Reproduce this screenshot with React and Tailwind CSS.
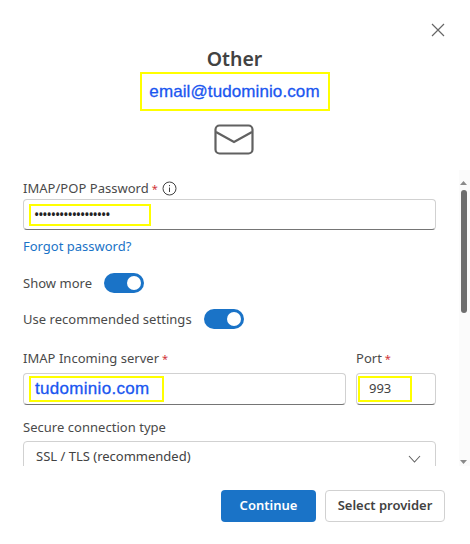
function Toggle() {
  return (
    <span className="flex h-[20px] w-[40px] items-center justify-end rounded-full bg-[#1a73c7] pr-[3px]">
      <span className="h-[14px] w-[14px] rounded-full bg-white" />
    </span>
  );
}

function Star() {
  return <span className="text-[11px] text-[#d13438]"> *</span>;
}

function Label({ children, className = "" }) {
  return <div className={`h-[20px] text-[13px] leading-[20px] tracking-[0.03px] text-[#4a4a4a] ${className}`}>{children}</div>;
}

export default function App() {
  return (
    <div className="flex h-[544px] w-[470px] flex-col overflow-hidden bg-white font-['Noto_Sans',sans-serif] text-[#424242]">
      <div className="flex h-[170px] shrink-0 flex-col items-center pr-[1px]">
        <div className="flex h-[46px] w-full items-end justify-end pb-[9px] pr-[24px]">
          <svg width="14" height="14" viewBox="0 0 14 14" fill="none" stroke="#666" strokeWidth="1.2">
            <path d="M1 1l12 12M13 1L1 13" />
          </svg>
        </div>
        <div className="h-[26px] text-[19.5px] font-semibold leading-[26px] text-[#424242]">Other</div>
        <div className="flex h-[39px] w-[190px] items-center justify-center border-2 border-[#ffff00] font-['Liberation_Sans',sans-serif] text-[17px] tracking-[0.1px] text-[#1a56f0] [-webkit-text-stroke:0.3px_#1a56f0]">
          email@tudominio.com
        </div>
        <svg className="mr-[2px] mt-[13px]" width="40" height="31" viewBox="0 0 40 31" fill="none" stroke="#616161" strokeWidth="2.2">
          <rect x="1.5" y="1.5" width="37" height="28" rx="4" />
          <path d="M2 8l18 10 18-10" />
        </svg>
      </div>

      <div className="flex h-[296px] shrink-0">
        <div className="h-[296px] w-[459px] overflow-hidden pl-[23px] pr-[23px] pt-[8px]">
          <Label className="flex items-center gap-[4px]">
            <span>IMAP/POP Password<Star /></span>
            <svg width="15" height="15" viewBox="0 0 15 15" fill="none" stroke="#424242">
              <circle cx="7.5" cy="7.5" r="6.5" />
              <path d="M7.5 6.5v4.5M7.5 4v1.2" />
            </svg>
          </Label>
          <div className="mt-[1px] flex h-[31px] items-center rounded-[4px] border border-[#d1d1d1] border-b-[#757575] pl-[5px]">
            <div className="flex h-[22px] w-[122px] items-center border-2 border-[#ffff00] pl-[3px] text-[14px] leading-none tracking-[-1.08px] text-[#222]">
              ••••••••••••••••••
            </div>
          </div>
          <div className="mt-[6px] h-[20px] text-[13px] leading-[20px] text-[#1a73c7]">Forgot password?</div>
          <div className="mt-[17px] flex h-[20px] items-center gap-[12px]">
            <Label>Show more</Label>
            <Toggle />
          </div>
          <div className="mt-[16px] flex h-[20px] items-center gap-[12px]">
            <Label>Use recommended settings</Label>
            <Toggle />
          </div>
          <div className="mt-[19px] flex gap-[10px]">
            <div className="w-[323px]">
              <Label>IMAP Incoming server<Star /></Label>
              <div className="mt-[5px] flex h-[32px] items-center rounded-[4px] border border-[#d1d1d1] border-b-[#757575] pl-[5px]">
                <div className="flex h-[26px] w-[135px] items-center border-2 border-[#ffff00] pl-[4px] font-['Liberation_Sans',sans-serif] text-[17px] tracking-[0.3px] text-[#1a56f0] [-webkit-text-stroke:0.3px_#1a56f0]">
                  tudominio.com
                </div>
              </div>
            </div>
            <div className="w-[80px]">
              <Label>Port<Star /></Label>
              <div className="mt-[5px] flex h-[32px] items-center rounded-[4px] border border-[#d1d1d1] border-b-[#757575] pl-[1px]">
                <div className="flex h-[26px] w-[54px] items-center border-2 border-[#ffff00] pl-[9px] text-[13px] text-[#424242]">
                  993
                </div>
              </div>
            </div>
          </div>
          <Label className="mt-[12px]">Secure connection type</Label>
          <div className="mt-[4px] flex h-[32px] items-center justify-between rounded-[4px] border border-[#d1d1d1] pl-[12px] pr-[14px] text-[13px]">
            <span>SSL / TLS (recommended)</span>
            <svg className="mt-[3px]" width="13" height="8" viewBox="0 0 13 8" fill="none" stroke="#616161" strokeWidth="1.1">
              <path d="M1 1l5.5 6L12 1" />
            </svg>
          </div>
        </div>
        <div className="flex h-[296px] w-[11px] flex-col items-center bg-[#fbfbfb] pr-[2px] pt-[11px]">
          <svg width="7" height="4" viewBox="0 0 7 4" fill="#8a8a8a"><path d="M3.5 0L7 4H0z" /></svg>
          <div className="mt-[5px] h-[123px] w-[6px] rounded-full bg-[#6e6e6e]" />
          <svg className="mt-[147px]" width="7" height="4" viewBox="0 0 7 4" fill="#8a8a8a"><path d="M3.5 4L7 0H0z" /></svg>
        </div>
      </div>

      <div className="flex justify-end gap-[9px] pr-[25px] pt-[24px]">
        <button className="h-[32px] w-[95px] rounded-[4px] bg-[#1a73c7] text-[13px] font-semibold text-white">Continue</button>
        <button className="h-[32px] w-[120px] rounded-[4px] border border-[#d1d1d1] bg-white text-[13px] font-semibold text-[#424242]">Select provider</button>
      </div>
    </div>
  );
}
